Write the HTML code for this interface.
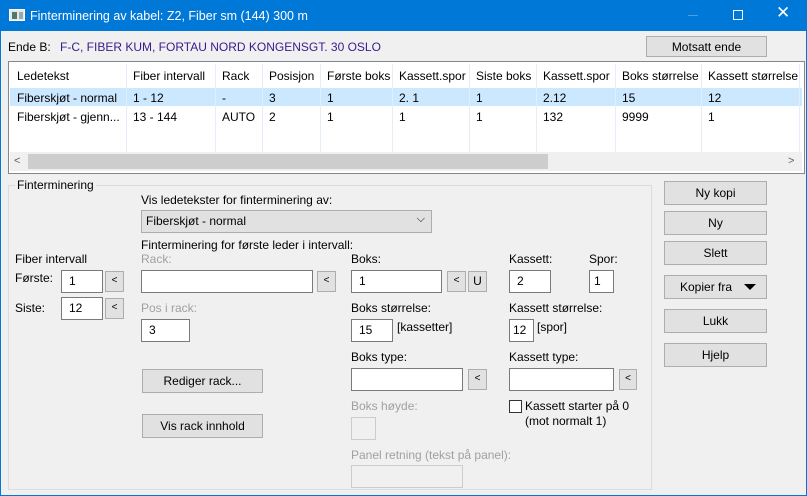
<!DOCTYPE html>
<html><head><meta charset="utf-8"><style>
*{box-sizing:border-box;margin:0;padding:0}
body{width:807px;height:496px;background:#f0f0f0;font-family:"Liberation Sans",sans-serif;font-size:12px;color:#000;position:relative;overflow:hidden}
.a{position:absolute;white-space:nowrap}
.t{position:absolute;white-space:nowrap;line-height:14px}
.g{color:#a0a0a0}
.in{position:absolute;background:#fff;border:1px solid #7a7a7a;padding:3px 0 0 7px;line-height:14px}
.dis{position:absolute;background:#f0f0f0;border:1px solid #ccc}
.b{position:absolute;background:#e1e1e1;border:1px solid #adadad;text-align:center;line-height:20px}
.sb{position:absolute;background:#e1e1e1;border:1px solid #adadad;text-align:center;font-size:10px;line-height:18px}
</style></head><body>
<div class="a" style="left:0;top:0;width:807px;height:31px;background:#0078d7"></div>
<div class="a" style="left:0;top:31px;width:1px;height:465px;background:#0078d7"></div>
<div class="a" style="left:806px;top:31px;width:1px;height:465px;background:#0078d7"></div>
<div class="a" style="left:0;top:495px;width:807px;height:1px;background:#0078d7"></div>
<div class="a" style="left:9px;top:9px;width:16px;height:12px;background:#e8e8e8;border:1px solid #fff"><div style="position:absolute;left:2px;top:2px;width:5px;height:7px;background:#4a7a6a"></div><div style="position:absolute;left:9px;top:2px;width:4px;height:7px;background:#9aa"></div></div>
<div class="t" style="left:30px;top:9px;color:#fff;font-size:12.5px">Finterminering av kabel: Z2, Fiber sm (144) 300 m</div>
<div class="a" style="left:688px;top:15px;width:10px;height:1px;background:#4d9de0"></div>
<div class="a" style="left:733px;top:10px;width:10px;height:10px;border:1px solid #fff"></div>
<div class="t" style="left:776px;top:6px;color:#fff;font-size:17px">✕</div>

<div class="t" style="left:8px;top:40px">Ende B:</div>
<div class="t" style="left:60px;top:40px;color:#3a1a8c">F-C, FIBER KUM, FORTAU NORD KONGENSGT. 30 OSLO</div>
<div class="b" style="left:646px;top:36px;width:121px;height:21px">Motsatt ende</div>

<div class="a" style="left:8px;top:61px;width:797px;height:113px;border:1px solid #828790;background:#fff"></div>
<div class="a" style="left:10px;top:88px;width:792px;height:18px;background:#cce8ff"></div>
<div class="a" style="left:126px;top:64px;width:1px;height:88px;background:#e5eef8"></div>
<div class="a" style="left:215px;top:64px;width:1px;height:88px;background:#e5eef8"></div>
<div class="a" style="left:262px;top:64px;width:1px;height:88px;background:#e5eef8"></div>
<div class="a" style="left:320px;top:64px;width:1px;height:88px;background:#e5eef8"></div>
<div class="a" style="left:392px;top:64px;width:1px;height:88px;background:#e5eef8"></div>
<div class="a" style="left:469px;top:64px;width:1px;height:88px;background:#e5eef8"></div>
<div class="a" style="left:536px;top:64px;width:1px;height:88px;background:#e5eef8"></div>
<div class="a" style="left:615px;top:64px;width:1px;height:88px;background:#e5eef8"></div>
<div class="a" style="left:701px;top:64px;width:1px;height:88px;background:#e5eef8"></div>
<div class="a" style="left:799px;top:64px;width:1px;height:88px;background:#e5eef8"></div>
<div class="t" style="left:17px;top:69px">Ledetekst</div><div class="t" style="left:133px;top:69px">Fiber intervall</div><div class="t" style="left:222px;top:69px">Rack</div><div class="t" style="left:269px;top:69px">Posisjon</div><div class="t" style="left:327px;top:69px">Første boks</div><div class="t" style="left:399px;top:69px">Kassett.spor</div><div class="t" style="left:476px;top:69px">Siste boks</div><div class="t" style="left:543px;top:69px">Kassett.spor</div><div class="t" style="left:622px;top:69px">Boks størrelse</div><div class="t" style="left:708px;top:69px">Kassett størrelse</div>
<div class="t" style="left:17px;top:91px">Fiberskjøt - normal</div><div class="t" style="left:133px;top:91px">1 - 12</div><div class="t" style="left:222px;top:91px">-</div><div class="t" style="left:269px;top:91px">3</div><div class="t" style="left:327px;top:91px">1</div><div class="t" style="left:399px;top:91px">2. 1</div><div class="t" style="left:476px;top:91px">1</div><div class="t" style="left:543px;top:91px">2.12</div><div class="t" style="left:622px;top:91px">15</div><div class="t" style="left:708px;top:91px">12</div>
<div class="t" style="left:17px;top:110px">Fiberskjøt - gjenn...</div><div class="t" style="left:133px;top:110px">13 - 144</div><div class="t" style="left:222px;top:110px">AUTO</div><div class="t" style="left:269px;top:110px">2</div><div class="t" style="left:327px;top:110px">1</div><div class="t" style="left:399px;top:110px">1</div><div class="t" style="left:476px;top:110px">1</div><div class="t" style="left:543px;top:110px">132</div><div class="t" style="left:622px;top:110px">9999</div><div class="t" style="left:708px;top:110px">1</div>
<div class="a" style="left:10px;top:152px;width:792px;height:19px;background:#f0f0f0"></div>
<div class="a" style="left:28px;top:154px;width:520px;height:15px;background:#cdcdcd"></div>
<div class="t" style="left:14px;top:154px;color:#606060;font-size:11px">&lt;</div>
<div class="t" style="left:788px;top:154px;color:#606060;font-size:11px">&gt;</div>

<div class="a" style="left:8px;top:185px;width:644px;height:305px;border:1px solid #dcdcdc"></div>
<div class="t" style="left:15px;top:178px;background:#f0f0f0;padding:0 2px">Finterminering</div>
<div class="t" style="left:141px;top:193px">Vis ledetekster for finterminering av:</div>
<div class="a" style="left:141px;top:210px;width:291px;height:23px;background:#e1e1e1;border:1px solid #adadad;padding:3px 0 0 4px;line-height:14px">Fiberskjøt - normal<span style="position:absolute;right:6px;top:1px;font-size:11px">⌵</span></div>
<div class="t" style="left:141px;top:238px">Finterminering for første leder i intervall:</div>
<div class="t" style="left:15px;top:252px">Fiber intervall</div>
<div class="t" style="left:15px;top:271px">Første:</div>
<div class="in" style="left:61px;top:270px;width:42px;height:23px">1</div>
<div class="sb" style="left:105px;top:271px;width:19px;height:21px">&lt;</div>
<div class="t" style="left:15px;top:301px">Siste:</div>
<div class="in" style="left:61px;top:297px;width:42px;height:23px">12</div>
<div class="sb" style="left:105px;top:298px;width:19px;height:21px">&lt;</div>
<div class="t g" style="left:141px;top:252px">Rack:</div>
<div class="in" style="left:141px;top:270px;width:172px;height:23px"></div>
<div class="sb" style="left:317px;top:271px;width:19px;height:21px">&lt;</div>
<div class="t g" style="left:141px;top:301px">Pos i rack:</div>
<div class="in" style="left:141px;top:319px;width:49px;height:23px">3</div>
<div class="b" style="left:142px;top:369px;width:121px;height:24px;line-height:22px">Rediger rack...</div>
<div class="b" style="left:142px;top:414px;width:121px;height:24px;line-height:22px">Vis rack innhold</div>
<div class="t" style="left:351px;top:252px">Boks:</div>
<div class="in" style="left:351px;top:270px;width:91px;height:23px">1</div>
<div class="sb" style="left:447px;top:271px;width:19px;height:21px">&lt;</div>
<div class="sb" style="left:468px;top:271px;width:19px;height:21px;font-size:12px">U</div>
<div class="t" style="left:351px;top:301px">Boks størrelse:</div>
<div class="in" style="left:351px;top:319px;width:42px;height:23px">15</div>
<div class="t" style="left:397px;top:320px">[kassetter]</div>
<div class="t" style="left:351px;top:350px">Boks type:</div>
<div class="in" style="left:351px;top:368px;width:112px;height:23px"></div>
<div class="sb" style="left:468px;top:369px;width:19px;height:21px">&lt;</div>
<div class="t g" style="left:351px;top:399px">Boks høyde:</div>
<div class="dis" style="left:351px;top:417px;width:25px;height:23px"></div>
<div class="t g" style="left:351px;top:448px">Panel retning (tekst på panel):</div>
<div class="dis" style="left:351px;top:465px;width:112px;height:23px"></div>
<div class="t" style="left:509px;top:252px">Kassett:</div>
<div class="in" style="left:509px;top:270px;width:42px;height:23px">2</div>
<div class="t" style="left:589px;top:252px">Spor:</div>
<div class="in" style="left:589px;top:270px;width:25px;height:23px;padding-left:4px">1</div>
<div class="t" style="left:509px;top:301px">Kassett størrelse:</div>
<div class="in" style="left:509px;top:319px;width:25px;height:23px;padding-left:3px">12</div>
<div class="t" style="left:537px;top:320px">[spor]</div>
<div class="t" style="left:509px;top:350px">Kassett type:</div>
<div class="in" style="left:509px;top:368px;width:105px;height:23px"></div>
<div class="sb" style="left:619px;top:369px;width:18px;height:21px">&lt;</div>
<div class="a" style="left:509px;top:400px;width:13px;height:13px;border:1px solid #333;background:#fff"></div>
<div class="t" style="left:525px;top:399px">Kassett starter på 0</div>
<div class="t" style="left:525px;top:414px">(mot normalt 1)</div>

<div class="b" style="left:664px;top:181px;width:103px;height:24px;line-height:22px">Ny kopi</div>
<div class="b" style="left:664px;top:211px;width:103px;height:24px;line-height:22px">Ny</div>
<div class="b" style="left:664px;top:241px;width:103px;height:24px;line-height:22px">Slett</div>
<div class="b" style="left:664px;top:275px;width:103px;height:24px;line-height:22px;text-align:left;padding-left:15px">Kopier fra<span style="position:absolute;right:10px;top:8px;width:0;height:0;border-left:6px solid transparent;border-right:6px solid transparent;border-top:6px solid #000"></span></div>
<div class="b" style="left:664px;top:309px;width:103px;height:24px;line-height:22px">Lukk</div>
<div class="b" style="left:664px;top:343px;width:103px;height:24px;line-height:22px">Hjelp</div>
</body></html>
